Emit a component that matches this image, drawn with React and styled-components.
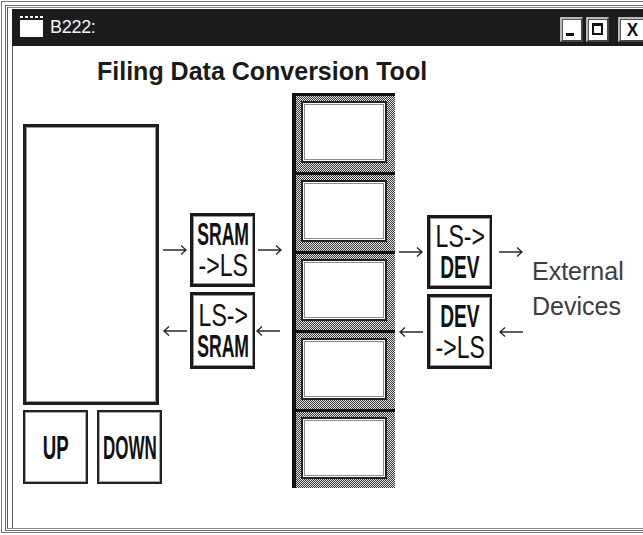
import styled, { createGlobalStyle } from "styled-components";

const GlobalStyle = createGlobalStyle`
  html, body {
    margin: 0;
    padding: 0;
    background: #fff;
    overflow: hidden;
  }
  body {
    font-family: "Liberation Sans", Arial, sans-serif;
  }
`;

function Arrow({ dir }) {
  return (
    <svg width="26" height="12" viewBox="0 0 26 12">
      {dir === "right" ? (
        <path d="M1 6 H24 M19 1.5 L24 6 L19 10.5" fill="none" stroke="#2a2a2a" strokeWidth="1.4" />
      ) : (
        <path d="M25 6 H2 M7 1.5 L2 6 L7 10.5" fill="none" stroke="#2a2a2a" strokeWidth="1.4" />
      )}
    </svg>
  );
}

function App() {
  return (
    <>
      <GlobalStyle />
      <Window>
        <Frame>
          <Inner>
            <TitleBar>
              <AppIcon>
                <IconDots />
                <IconBody />
              </AppIcon>
              <TitleText>B222:</TitleText>
              <WinButtons>
                <WinButton>
                  <MinGlyph />
                </WinButton>
                <WinButton>
                  <MaxGlyph />
                </WinButton>
                <WinButton $wide $gap>
                  <CloseGlyph>X</CloseGlyph>
                </WinButton>
              </WinButtons>
            </TitleBar>
            <Content>
              <Heading>Filing Data Conversion Tool</Heading>
              <Diagram>
                <LeftCol>
                  <ListBox />
                  <ButtonRow>
                    <PushButton>
                      <Label $bold $size={34} $scale={0.55}>UP</Label>
                    </PushButton>
                    <PushButton>
                      <Label $bold $size={34} $scale={0.5}>DOWN</Label>
                    </PushButton>
                  </ButtonRow>
                </LeftCol>

                <Converter $top={120} $cols="28px 65px 37px" $rows="74px 77px">
                  <ArrowCell $pad={0}><Arrow dir="right" /></ArrowCell>
                  <ConvBox>
                    <Label $bold $scale={0.55}>SRAM</Label>
                    <Label $scale={0.72}>-&gt;LS</Label>
                  </ConvBox>
                  <ArrowCell $pad={2}><Arrow dir="right" /></ArrowCell>
                  <ArrowCell $pad={0}><Arrow dir="left" /></ArrowCell>
                  <ConvBox>
                    <Label $scale={0.72}>LS-&gt;</Label>
                    <Label $bold $scale={0.55}>SRAM</Label>
                  </ConvBox>
                  <ArrowCell $pad={0}><Arrow dir="left" /></ArrowCell>
                </Converter>

                <MemoryColumn>
                  {[0, 1, 2, 3, 4].map((i) => (
                    <Slot key={i}>
                      <SlotWindow />
                    </Slot>
                  ))}
                </MemoryColumn>

                <Converter $top={122} $cols="32px 65px 40px" $rows="74px 75px">
                  <ArrowCell $pad={3}><Arrow dir="right" /></ArrowCell>
                  <ConvBox>
                    <Label $scale={0.72}>LS-&gt;</Label>
                    <Label $bold $scale={0.6}>DEV</Label>
                  </ConvBox>
                  <ArrowCell $pad={6}><Arrow dir="right" /></ArrowCell>
                  <ArrowCell $pad={3}><Arrow dir="left" /></ArrowCell>
                  <ConvBox>
                    <Label $bold $scale={0.6}>DEV</Label>
                    <Label $scale={0.72}>-&gt;LS</Label>
                  </ConvBox>
                  <ArrowCell $pad={6}><Arrow dir="left" /></ArrowCell>
                </Converter>

                <ExternalText>
                  External
                  <br />
                  Devices
                </ExternalText>
              </Diagram>
            </Content>
          </Inner>
        </Frame>
      </Window>
    </>
  );
}

export default App;

const Window = styled.div`
  width: 660px;
  margin: 1px 0 0 1px;
  border: 1px solid #7a7a7a;
  padding: 3px 3px 1px 3px;
`;

const Frame = styled.div`
  border: 1px solid #6a6a6a;
  padding: 1px;
`;

const Inner = styled.div`
  border-top: 1px solid #888;
  border-left: 1px solid #555;
  border-bottom: 1px solid #888;
  padding: 1px 0 0 4px;
`;

const TitleBar = styled.div`
  height: 37px;
  background: #1c1c1c;
  display: flex;
  align-items: center;
  padding-left: 8px;
  color: #fff;
`;

const AppIcon = styled.div`
  width: 23px;
  height: 21px;
  display: flex;
  flex-direction: column;
  gap: 2px;
  margin-top: -2px;
`;

const IconDots = styled.div`
  height: 2px;
  background: repeating-linear-gradient(90deg, #fff 0 3px, transparent 3px 5px);
`;

const IconBody = styled.div`
  flex: 1;
  background: #fff;
`;

const TitleText = styled.span`
  margin-left: 7px;
  font-size: 18px;
  letter-spacing: -0.3px;
  color: #f4f4f4;
`;

const WinButtons = styled.div`
  margin-left: auto;
  display: flex;
  align-items: center;
  margin-right: 17px;
  margin-top: 3px;
`;

const WinButton = styled.div`
  width: ${(p) => (p.$wide ? 28 : 23)}px;
  height: 25px;
  margin-left: ${(p) => (p.$gap ? 9 : 3)}px;
  box-sizing: border-box;
  background: #fff;
  border: 2px solid #b8b8b8;
  border-right-color: #444;
  border-bottom-color: #444;
  box-shadow: inset 1px 1px 0 #555;
  display: flex;
  align-items: center;
  justify-content: center;
`;

const MinGlyph = styled.div`
  width: 8px;
  height: 3px;
  background: #111;
  margin-top: 10px;
  margin-right: 3px;
`;

const MaxGlyph = styled.div`
  width: 11px;
  height: 12px;
  border: 2px solid #111;
  border-top-width: 3px;
  box-sizing: border-box;
`;

const CloseGlyph = styled.span`
  font-size: 19px;
  font-weight: bold;
  color: #111;
  line-height: 1;
  transform: scaleX(0.9);
`;

const Content = styled.div`
  height: 482px;
  box-sizing: border-box;
  border-left: 1px solid #555;
  padding: 13px 0 0 10px;
`;

const Heading = styled.div`
  margin-left: 74px;
  font-size: 25px;
  line-height: 25px;
  font-weight: bold;
  color: #1a1a1a;
`;

const Diagram = styled.div`
  margin-top: 9px;
  display: flex;
  align-items: flex-start;
`;

const LeftCol = styled.div`
  width: 139px;
  margin-top: 31px;
`;

const ListBox = styled.div`
  width: 136px;
  height: 281px;
  box-sizing: border-box;
  border: 3px solid #1e1e1e;
  box-shadow: inset 0 0 0 1px #999;
`;

const ButtonRow = styled.div`
  display: flex;
  gap: 9px;
  margin-top: 5px;
`;

const PushButton = styled.div`
  width: 65px;
  height: 74px;
  box-sizing: border-box;
  border: 2px solid #222;
  box-shadow: inset 0 0 0 1px #aaa;
  display: flex;
  align-items: center;
  justify-content: center;
`;

const Label = styled.span`
  display: block;
  font-size: ${(p) => p.$size || 32}px;
  line-height: 31px;
  font-weight: ${(p) => (p.$bold ? "bold" : "normal")};
  color: #111;
  white-space: nowrap;
  transform: scaleX(${(p) => p.$scale});
  text-align: center;
`;

const Converter = styled.div`
  margin-top: ${(p) => p.$top}px;
  display: grid;
  grid-template-columns: ${(p) => p.$cols};
  grid-template-rows: ${(p) => p.$rows};
  row-gap: 5px;
`;

const ArrowCell = styled.div`
  display: flex;
  align-items: center;
  padding-left: ${(p) => p.$pad}px;
`;

const ConvBox = styled.div`
  box-sizing: border-box;
  border: 3px solid #1a1a1a;
  border-right-width: 2px;
  box-shadow: inset 0 0 0 1px #999;
  display: flex;
  flex-direction: column;
  align-items: center;
  justify-content: center;
  overflow: hidden;
`;

const MemoryColumn = styled.div`
  width: 103px;
  box-sizing: border-box;
  border-left: 4px solid #111;
  display: flex;
  flex-direction: column;
`;

const Slot = styled.div`
  height: 79px;
  box-sizing: border-box;
  border-top: 3px solid #111;
  padding: 5px 8px 9px 5px;
  background: repeating-conic-gradient(#3a3a3a 0 25%, #e2e2e2 0 50%) 0 0 / 2px 2px;
`;

const SlotWindow = styled.div`
  height: 100%;
  box-sizing: border-box;
  background: #fff;
  border: 2px solid #222;
  box-shadow: inset 0 0 0 1px #fff, inset 0 0 0 2px #8a8a8a;
`;

const ExternalText = styled.div`
  margin-top: 161px;
  font-size: 25px;
  line-height: 35px;
  color: #3c3c3c;
`;
